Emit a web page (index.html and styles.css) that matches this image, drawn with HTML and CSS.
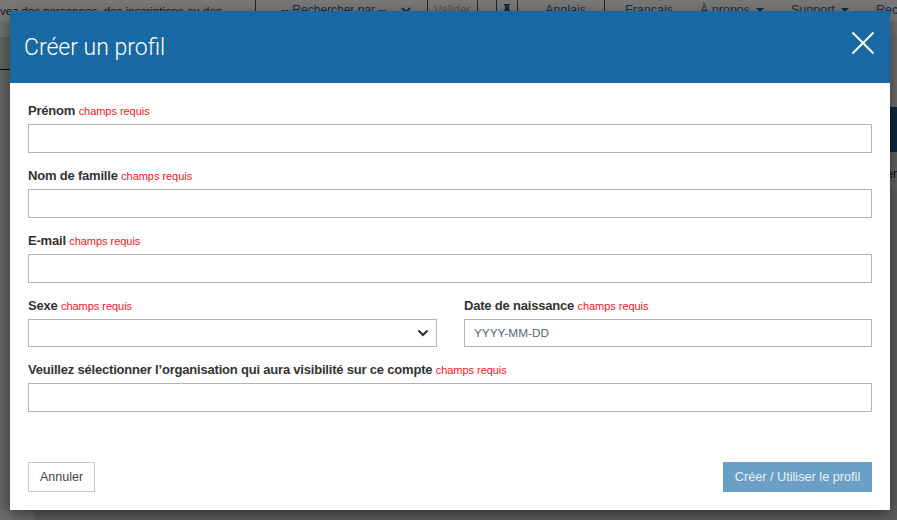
FILE: index.html
```html
<!DOCTYPE html>
<html lang="fr">
<head>
<meta charset="utf-8">
<title>Créer un profil</title>
<link rel="stylesheet" href="styles.css">
</head>
<body>
<div class="page">
  <nav class="topbar">
    <div class="cell intro">vez des personnes, des inscriptions ou des</div>
    <div class="cell search">-- Rechercher par --
      <svg class="search-chevron" width="10" height="7" viewBox="0 0 10 7"><path d="M1 1l4 4 4-4" fill="none" stroke="#1f5f8f" stroke-width="2"/></svg>
    </div>
    <div class="cell validate">Valider</div>
    <div class="cell blank"></div>
    <div class="cell pin"><svg width="8" height="12" viewBox="0 0 8 12"><path d="M1 0h6v1.500h-1v4l2 2v1h-3v3.500h-2v-3.500h-3v-1l2-2v-4h-1z" fill="#1f5f8f"/></svg></div>
    <a class="link link-en">Anglais</a>
    <a class="link link-fr">Français</a>
    <a class="link link-about">À propos<i class="caret"></i></a>
    <a class="link link-support">Support<i class="caret"></i></a>
    <a class="link link-last">Rec</a>
  </nav>
  <div class="subbar"></div>
  <div class="sides">
    <div class="side side-left">
      <div class="left-top"></div>
      <div class="left-main"></div>
      <div class="left-foot"></div>
    </div>
    <div class="side side-right">
      <div class="right-top"></div>
      <div class="right-band"></div>
      <div class="right-text"><span>er</span></div>
      <div class="right-main"></div>
    </div>
  </div>
</div>
<div class="overlay"></div>
<section class="modal">
  <header class="modal-head">
    <h1>Créer un profil</h1>
    <svg class="close" width="24" height="24" viewBox="0 0 24 24"><path d="M1.500 1.500l21 21M22.500 1.500l-21 21" fill="none" stroke="#fff" stroke-width="2"/></svg>
  </header>
  <form class="modal-body">
    <div class="field">
      <label>Prénom <span class="req">champs requis</span></label>
      <input class="control" type="text">
    </div>
    <div class="field">
      <label>Nom de famille <span class="req">champs requis</span></label>
      <input class="control" type="text">
    </div>
    <div class="field">
      <label>E-mail <span class="req">champs requis</span></label>
      <input class="control" type="text">
    </div>
    <div class="columns">
      <div class="field">
        <label>Sexe <span class="req">champs requis</span></label>
        <div class="select-wrap">
          <select class="control short"><option></option></select>
          <svg class="chevron" width="12" height="8" viewBox="0 0 12 8"><path d="M1.500 1.500l4.500 4.500 4.500-4.500" fill="none" stroke="#333" stroke-width="2.200"/></svg>
        </div>
      </div>
      <div class="field">
        <label>Date de naissance <span class="req">champs requis</span></label>
        <input class="control short" type="text" placeholder="YYYY-MM-DD">
      </div>
    </div>
    <div class="field">
      <label>Veuillez sélectionner l’organisation qui aura visibilité sur ce compte <span class="req">champs requis</span></label>
      <input class="control" type="text">
    </div>
    <div class="actions">
      <button class="btn btn-cancel" type="button">Annuler</button>
      <button class="btn btn-primary" type="button">Créer / Utiliser le profil</button>
    </div>
  </form>
</section>
</body>
</html>
```
FILE: styles.css
```css
* { box-sizing: border-box; }
html, body { margin: 0; height: 100%; overflow: hidden; }
body { font-family: "Liberation Sans", Arial, sans-serif; background: #c4c4c4; position: relative; }

.page { width: 897px; height: 520px; display: flex; flex-direction: column; }
.topbar { height: 22px; background: #f2f2f2; display: flex; align-items: flex-start; font-size: 12.500px; line-height: 21px; color: #1f5f8f; flex: none; }
.cell { height: 22px; flex: none; white-space: nowrap; }
.intro { width: 256px; font-size: 11.600px; color: #333; border-right: 1px solid #1f4f78; }
.search { width: 172px; padding-left: 25px; font-size: 12px; border-right: 1px solid #1f4f78; }
.search-chevron { margin-left: 11px; }
.validate { width: 50px; padding-left: 6px; font-size: 12px; color: #aaa; border-right: 1px solid #1f4f78; }
.blank { width: 19px; border-right: 1px solid #1f4f78; }
.pin { width: 21px; padding: 2px 0 0 6px; border-right: 1px solid #1f4f78; }
.link { white-space: nowrap; flex: none; }
.link-en { margin-left: 27px; width: 60px; height: 18px; border-right: 1px solid #1f4f78; }
.link-fr { margin-left: 20px; width: 75px; }
.link-about { width: 91px; }
.link-support { width: 85px; }
.caret { display: inline-block; margin-left: 6px; vertical-align: 2px; border: 4px solid transparent; border-top-color: #1f5f8f; border-bottom: 0; }

.subbar { height: 15px; background: #e2e2e2; flex: none; }
.sides { flex: 1; display: flex; justify-content: space-between; background: #c4c4c4; }
.side { display: flex; flex-direction: column; }
.side-left { width: 34px; }
.left-top { height: 33px; background: #c8c8c8; border-bottom: 1px solid #111; flex: none; }
.left-main { flex: 1; background: #cfcfcf; }
.left-foot { height: 10px; background: #dcdcdc; flex: none; }
.side-right { width: 7px; }
.right-top { height: 70px; background: #d8d8d8; flex: none; }
.right-band { height: 45px; background: #18517f; flex: none; }
.right-text { height: 38px; background: #c6c6c6; flex: none; display: flex; justify-content: flex-end; font-size: 12px; line-height: 44px; color: #222; white-space: nowrap; }
.right-text span { flex: none; }
.right-main { flex: 1; background: #bcbcbc; }

.overlay { position: absolute; inset: 0; background: rgba(0, 0, 0, .5); }

.modal { position: absolute; left: 10px; top: 11px; width: 880px; height: 499px; background: #fff; box-shadow: 0 5px 15px rgba(0, 0, 0, .5); display: flex; flex-direction: column; }
.modal-head { height: 72px; background: #1869a3; display: flex; align-items: center; justify-content: space-between; padding: 0 15px 0 14px; flex: none; }
.modal-head h1 { margin: 0; font-family: Roboto, "Liberation Sans", sans-serif; font-weight: 300; font-size: 23px; color: #fff; }
.close { display: block; margin-bottom: 9px; }

.modal-body { flex: 1; padding: 20px 18px 18px; display: flex; flex-direction: column; }
.field { margin-bottom: 15px; }
.field label { display: block; height: 16px; margin-bottom: 5px; font-size: 13px; line-height: 16px; font-weight: 700; letter-spacing: -.2px; color: #333; white-space: nowrap; }
.req { font-size: 11px; font-weight: 400; letter-spacing: -.04px; color: #f8131c; }
.control { display: block; width: 100%; height: 29px; padding: 0 9px; border: 1px solid #b3b3b3; border-radius: 0; background: #fff; font-family: inherit; font-size: 11.800px; color: #333; outline: none; }
.control.short { height: 28px; }
.control::placeholder { color: #55657a; opacity: 1; }
select.control { appearance: none; -webkit-appearance: none; }
.columns { display: grid; grid-template-columns: 409px 408px; column-gap: 27px; }
.select-wrap { position: relative; }
.chevron { position: absolute; right: 8px; top: 10px; }

.actions { margin-top: auto; display: flex; justify-content: space-between; }
.btn { height: 30px; font-family: inherit; font-size: 12.700px; border-radius: 0; cursor: pointer; padding: 0; }
.btn-cancel { width: 67px; background: #fff; border: 1px solid #c8c8c8; color: #444; font-size: 12.500px; }
.btn-primary { width: 149px; background: #6a9fc6; border: 1px solid #6a9fc6; color: #e8f1f7; }
```
